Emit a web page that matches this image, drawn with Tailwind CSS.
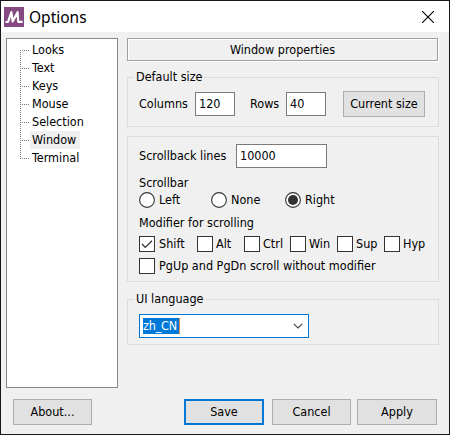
<!DOCTYPE html>
<html lang="en">
<head>
<meta charset="utf-8">
<title>Options</title>
<script src="https://cdn.jsdelivr.net/npm/@tailwindcss/browser@4"></script>
</head>
<body class="w-[450px] h-[435px] overflow-hidden">
<div class="w-[450px] h-[435px] border border-[#17171a] bg-[#f0f0f0] flex flex-col text-black whitespace-nowrap font-['DejaVu_Sans_Condensed','DejaVu_Sans',sans-serif] [font-stretch:condensed] text-[12.5px] leading-4">
  <header class="h-[31px] shrink-0 bg-white flex items-center pl-[3px] pr-[15px]">
    <svg class="w-5 h-5 shrink-0" viewBox="0 0 20 20"><rect width="20" height="20" fill="#854a82"/><path d="M1.5 15H4L7.4 5.2 8.6 14.4 13.6 5.2 14.2 14.8H18.6" fill="none" stroke="#fff" stroke-width="2.2" stroke-linejoin="round"/></svg>
    <h1 class="ml-[5px] font-['Noto_Sans',sans-serif] text-[15.5px] leading-5">Options</h1>
    <svg class="ml-auto w-3 h-3" viewBox="0 0 12 12"><path d="M0 0L12 12M12 0L0 12" stroke="#000" stroke-width="1.1"/></svg>
  </header>
  <main class="flex pt-[6px] pl-[5px] h-[356px] shrink-0">
    <nav class="w-[112px] h-[350px] border border-[#828790] bg-white pl-[13px] pt-[2px] flex">
      <svg class="w-[10px] h-[126px] shrink-0" viewBox="0 0 10 126" shape-rendering="crispEdges"><path d="M.5 9V118M0 9.5H9M0 27.5H9M0 45.5H9M0 63.5H9M0 81.5H9M0 99.5H9M0 117.5H9" fill="none" stroke="#777" stroke-dasharray="1 1"/></svg>
      <ul class="leading-[18px]">
        <li class="pl-[2px]">Looks</li>
        <li class="pl-[2px]">Text</li>
        <li class="pl-[2px]">Keys</li>
        <li class="pl-[2px]">Mouse</li>
        <li class="pl-[2px]">Selection</li>
        <li class="pl-[2px] w-[50px] bg-[#f0f0f0]">Window</li>
        <li class="pl-[2px]">Terminal</li>
      </ul>
    </nav>
    <section class="ml-[9px] w-[312px] flex flex-col">
      <h2 class="h-[23px] w-[311px] shrink-0 border border-[#a0a0a0] shadow-[1px_1px_0_#fff,inset_1px_1px_0_#fff] flex items-center justify-center"><span>Window properties</span></h2>
      <fieldset class="mt-2 h-[58px] shrink-0 border border-[#dcdcdc]">
        <legend class="ml-[6px] px-[2px] h-4">Default size</legend>
        <div class="mt-[6px] pl-[11px] flex items-center h-[26px]">
          <span class="w-[56px]">Columns</span><span class="w-10 h-6 border border-[#7a7a7a] bg-white pl-[3px] leading-[21px]">120</span>
          <span class="ml-[15px] w-[36px]">Rows</span><span class="w-10 h-6 border border-[#7a7a7a] bg-white pl-[3px] leading-[21px]">40</span>
          <button class="ml-[17px] w-[82px] h-[26px] border border-[#adadad] bg-[#e1e1e1]"><span>Current size</span></button>
        </div>
      </fieldset>
      <div class="mt-[9px] h-[146px] shrink-0 border border-[#dcdcdc] pl-[11px] pt-[7px]">
        <div class="h-6 flex items-center"><span class="w-[97px]">Scrollback lines</span><span class="w-[91px] h-6 border border-[#7a7a7a] bg-white pl-[3px] leading-[21px]">10000</span></div>
        <div class="mt-[6px] h-[17px] leading-[17px]">Scrollbar</div>
        <div class="flex h-[18px] items-center">
          <label class="flex items-center w-[72px] gap-1"><svg class="w-4 h-4" viewBox="0 0 16 16"><circle cx="8" cy="8" r="7.4" fill="#fff" stroke="#333" stroke-width="1.1"/></svg><span>Left</span></label>
          <label class="flex items-center w-[74px] gap-1"><svg class="w-4 h-4" viewBox="0 0 16 16"><circle cx="8" cy="8" r="7.4" fill="#fff" stroke="#333" stroke-width="1.1"/></svg><span>None</span></label>
          <label class="flex items-center gap-1"><svg class="w-4 h-4" viewBox="0 0 16 16"><circle cx="8" cy="8" r="7.4" fill="#fff" stroke="#333" stroke-width="1.1"/><circle cx="8" cy="8" r="5" fill="#333"/></svg><span>Right</span></label>
        </div>
        <div class="mt-[6px] h-4">Modifier for scrolling</div>
        <div class="mt-[5px] h-4 flex">
          <label class="flex items-center w-[58px] gap-1"><i class="w-4 h-4 border border-[#333] bg-white"><svg class="w-[14px] h-[14px]" viewBox="0 0 14 14"><path d="M2 7l3.3 3.4L12 3.7" fill="none" stroke="#333" stroke-width="1.3"/></svg></i><span>Shift</span></label>
          <label class="flex items-center w-[47px] gap-[3px]"><i class="w-4 h-4 border border-[#333] bg-white"></i><span>Alt</span></label>
          <label class="flex items-center w-[46px] gap-[3px]"><i class="w-4 h-4 border border-[#333] bg-white"></i><span>Ctrl</span></label>
          <label class="flex items-center w-[47px] gap-[3px]"><i class="w-4 h-4 border border-[#333] bg-white"></i><span>Win</span></label>
          <label class="flex items-center w-[47px] gap-[3px]"><i class="w-4 h-4 border border-[#333] bg-white"></i><span>Sup</span></label>
          <label class="flex items-center gap-[3px]"><i class="w-4 h-4 border border-[#333] bg-white"></i><span>Hyp</span></label>
        </div>
        <label class="mt-[6px] flex items-center gap-1"><i class="w-4 h-4 border border-[#333] bg-white"></i><span>PgUp and PgDn scroll without modifier</span></label>
      </div>
      <fieldset class="mt-[9px] h-[54px] shrink-0 border border-[#dcdcdc]">
        <legend class="ml-[6px] px-[2px] h-4">UI language</legend>
        <div class="mt-[7px] ml-[11px] w-[170px] h-6 border border-[#0078d7] bg-white flex items-center pl-[3px] pr-[5px]">
          <span class="w-[37px] h-4 bg-[#0078d7] text-white border-r border-[#e58a4c] leading-4 tracking-[-0.2px]">zh_CN</span>
          <svg class="ml-auto w-[10px] h-[6px]" viewBox="0 0 10 6"><path d="M.8.8L5 5 9.2.8" fill="none" stroke="#444" stroke-width="1.2"/></svg>
        </div>
      </fieldset>
    </section>
  </main>
  <footer class="mt-[11px] flex h-[26px] pl-3">
    <button class="w-[79px] border border-[#adadad] bg-[#e1e1e1]"><span>About...</span></button>
    <button class="ml-[92px] w-[80px] border-2 border-[#0078d7] bg-[#e1e1e1]"><span>Save</span></button>
    <button class="ml-2 w-[79px] border border-[#adadad] bg-[#e1e1e1]"><span>Cancel</span></button>
    <button class="ml-[6px] w-[80px] border border-[#adadad] bg-[#e1e1e1]"><span>Apply</span></button>
  </footer>
</div>
</body>
</html>
